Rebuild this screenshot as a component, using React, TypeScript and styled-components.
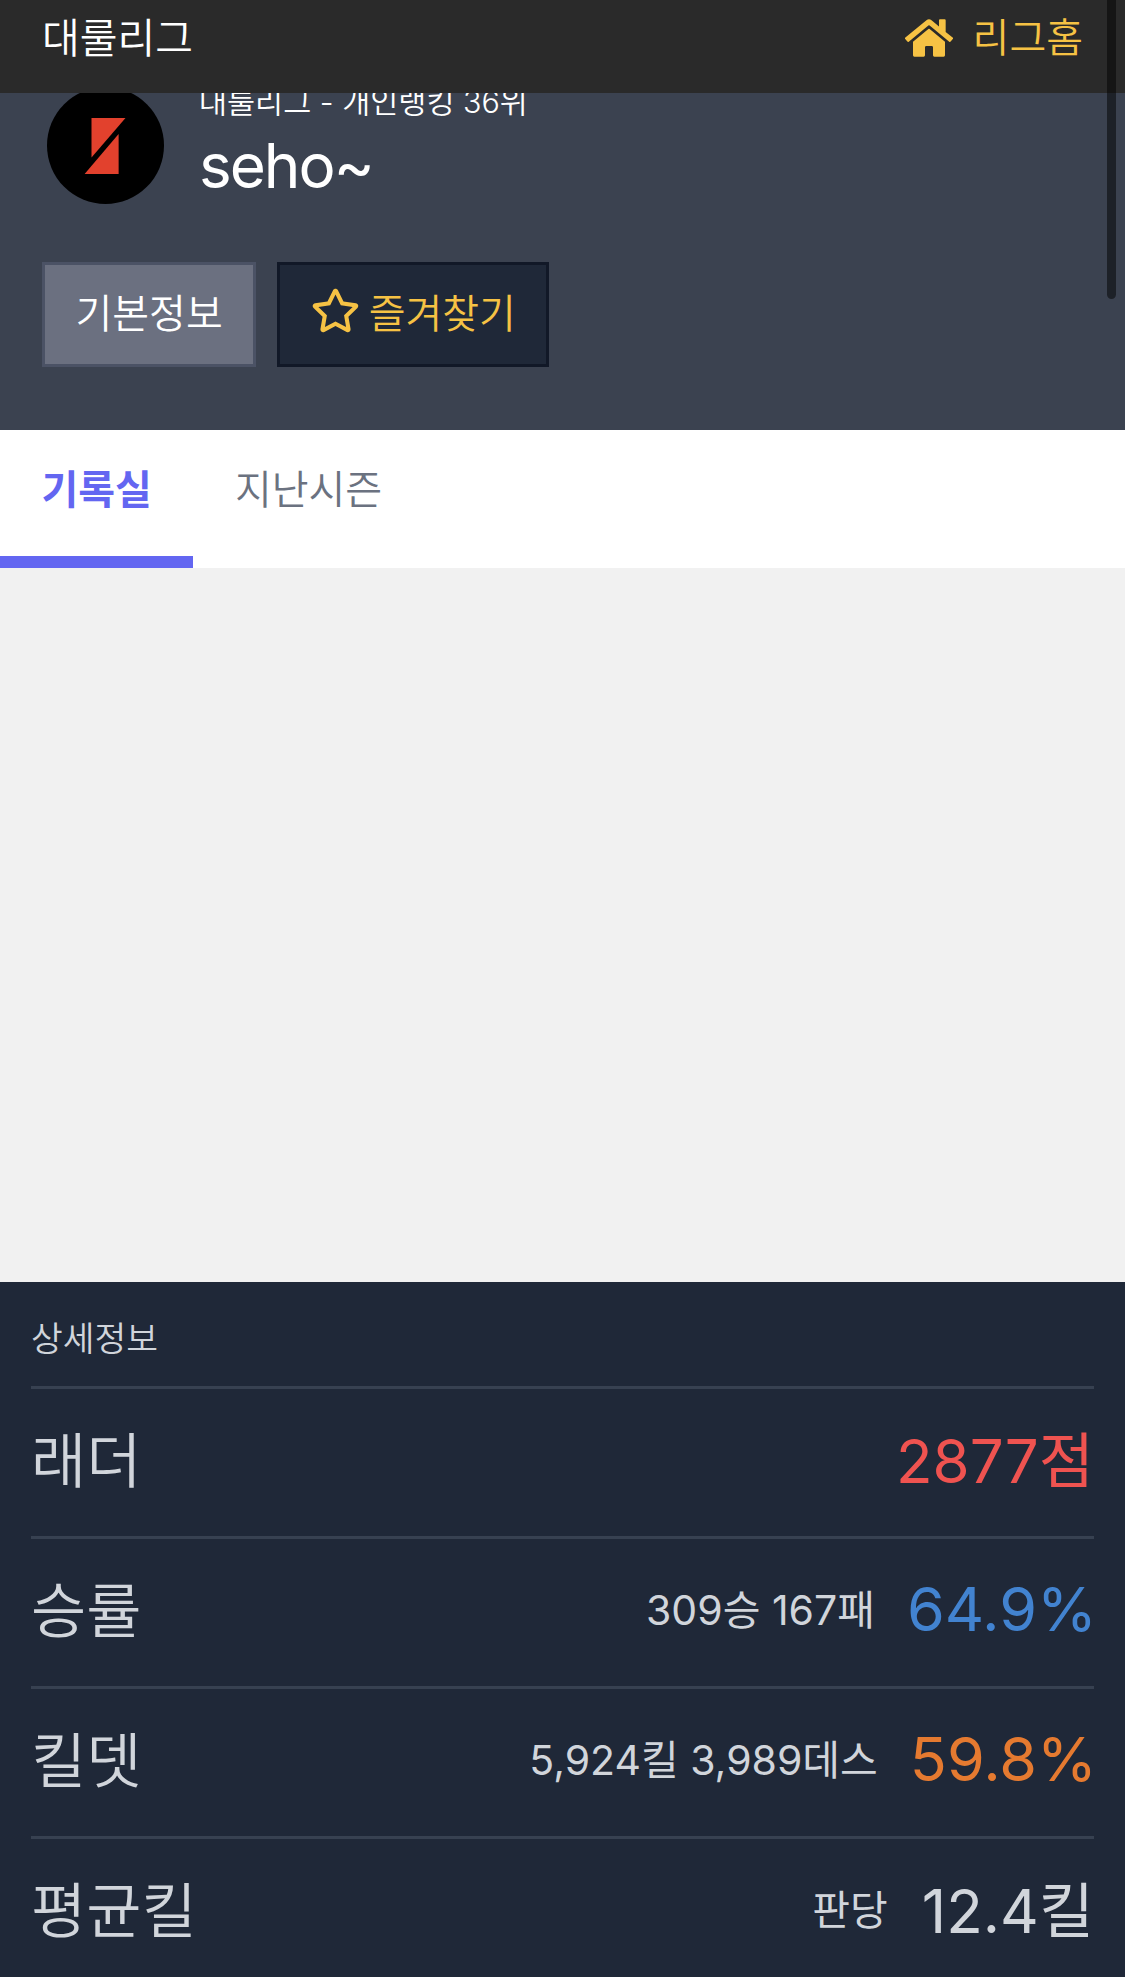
import styled, { createGlobalStyle } from "styled-components";
import { FaHome, FaRegStar } from "react-icons/fa";

const GlobalStyle = createGlobalStyle`
  html, body {
    margin: 0;
    padding: 0;
    background: #f1f1f1;
    font-family: Inter, "Noto Sans CJK KR", sans-serif;
  }
  * {
    box-sizing: border-box;
  }
`;

const Page = styled.div`
  position: relative;
  width: 1125px;
  height: 1977px;
  overflow: hidden;
  display: flex;
  flex-direction: column;
`;

const NavBar = styled.div`
  position: absolute;
  top: 0;
  left: 0;
  right: 0;
  height: 93px;
  background: #2a2a2a;
  display: flex;
  align-items: flex-start;
  justify-content: space-between;
  padding: 12px 42px 0;
`;

const NavTitle = styled.span`
  color: #fff;
  font-size: 41px;
  font-weight: 350;
  line-height: 52px;
`;

const HomeLink = styled.span`
  display: flex;
  align-items: center;
  gap: 20px;
  color: #f6c244;
  font-size: 40px;
  font-weight: 350;
  line-height: 52px;
`;

const ScrollThumb = styled.div`
  position: absolute;
  top: 0;
  right: 9px;
  width: 9px;
  height: 299px;
  border-radius: 0 0 5px 5px;
  background: rgba(0, 0, 0, 0.5);
`;

const Hero = styled.header`
  flex: none;
  height: 430px;
  background: #3b4250;
  padding: 87px 42px 0 47px;
  display: flex;
  flex-direction: column;
`;

const Profile = styled.div`
  display: flex;
  align-items: flex-start;
  gap: 35px;
  height: 175px;
`;

const Avatar = styled.svg`
  width: 117px;
  height: 117px;
  flex: none;
`;

const ProfileText = styled.div`
  display: flex;
  flex-direction: column;
  color: #fff;
`;

const League = styled.span`
  font-size: 30.5px;
  font-weight: 350;
  line-height: 30px;
`;

const PlayerName = styled.span`
  margin-top: 13px;
  font-size: 62px;
  line-height: 72px;
  letter-spacing: -2px;
`;

const Actions = styled.div`
  display: flex;
  gap: 21px;
  margin-left: -5px;
`;

const ActionButton = styled.button<{ $dark?: boolean }>`
  height: 105px;
  padding: 0 30.5px 8px;
  display: flex;
  align-items: center;
  gap: 9px;
  font-family: inherit;
  font-size: 40px;
  font-weight: 350;
  border: 3px solid ${({ $dark }) => ($dark ? "#111827" : "#4b5265")};
  background: ${({ $dark }) => ($dark ? "#1f2838" : "#6b7080")};
  color: ${({ $dark }) => ($dark ? "#f6c244" : "#fff")};
`;

const Tabs = styled.nav`
  flex: none;
  height: 138px;
  background: #fff;
  display: flex;
`;

const Tab = styled.div<{ $active?: boolean }>`
  height: 138px;
  padding: 0 41.5px 12px;
  display: flex;
  align-items: center;
  font-size: 40px;
  font-weight: ${({ $active }) => ($active ? 700 : 350)};
  color: ${({ $active }) => ($active ? "#6366f1" : "#6b7280")};
  border-bottom: 12px solid ${({ $active }) => ($active ? "#6366f1" : "transparent")};
`;

const Content = styled.main`
  flex: none;
  height: 714px;
  background: #f1f1f1;
`;

const Details = styled.section`
  flex: none;
  background: #1f2838;
  padding: 0 31px;
  color: #d1d5db;
`;

const DetailsTitle = styled.div`
  height: 104px;
  display: flex;
  align-items: center;
  font-size: 34.5px;
  font-weight: 350;
  padding-top: 4px;
`;

const StatRow = styled.div`
  height: 150px;
  padding-bottom: 12px;
  border-top: 3px solid #374151;
  display: flex;
  align-items: center;
  justify-content: space-between;
`;

const StatLabel = styled.span`
  font-size: 60px;
  font-weight: 350;
`;

const StatValues = styled.div`
  display: flex;
  align-items: center;
  gap: 34px;
`;

const StatNote = styled.span`
  font-size: 41px;
`;

const StatValue = styled.span<{ $color?: string; $percent?: boolean }>`
  font-size: ${({ $percent }) => ($percent ? "61px" : "60px")};
  margin: ${({ $percent }) => ($percent ? "0 -3px 0 -2px" : "0")};
  padding-top: ${({ $percent }) => ($percent ? "5px" : "0")};
  color: ${({ $color }) => $color ?? "#d1d5db"};
`;

const stats = [
  { label: "래더", value: "2877점", color: "#ef5350" },
  { label: "승률", note: "309승 167패", value: "64.9%", color: "#4283d0" },
  { label: "킬뎃", note: "5,924킬 3,989데스", value: "59.8%", color: "#e57a30" },
  { label: "평균킬", note: "판당", value: "12.4킬" },
];

export default function App() {
  return (
    <Page>
      <GlobalStyle />
      <Hero>
        <Profile>
          <Avatar viewBox="0 0 117 117">
            <circle cx="58.5" cy="58.5" r="58.5" fill="#000" />
            <polygon points="44.5,31 78.5,31 44.5,70.5" fill="#e2412d" />
            <polygon points="71.6,47 71.6,87 37.6,87" fill="#e2412d" />
          </Avatar>
          <ProfileText>
            <League>대룰리그 - 개인랭킹 36위</League>
            <PlayerName>seho~</PlayerName>
          </ProfileText>
        </Profile>
        <Actions>
          <ActionButton>기본정보</ActionButton>
          <ActionButton $dark>
            <FaRegStar size={49} />
            즐겨찾기
          </ActionButton>
        </Actions>
      </Hero>
      <Tabs>
        <Tab $active>기록실</Tab>
        <Tab>지난시즌</Tab>
      </Tabs>
      <Content />
      <Details>
        <DetailsTitle>상세정보</DetailsTitle>
        {stats.map((stat) => (
          <StatRow key={stat.label}>
            <StatLabel>{stat.label}</StatLabel>
            <StatValues>
              {stat.note && <StatNote>{stat.note}</StatNote>}
              <StatValue $color={stat.color} $percent={stat.value.endsWith("%")}>
                {stat.value}
              </StatValue>
            </StatValues>
          </StatRow>
        ))}
      </Details>
      <NavBar>
        <NavTitle>대룰리그</NavTitle>
        <HomeLink>
          <FaHome size={48} />
          리그홈
        </HomeLink>
      </NavBar>
      <ScrollThumb />
    </Page>
  );
}
